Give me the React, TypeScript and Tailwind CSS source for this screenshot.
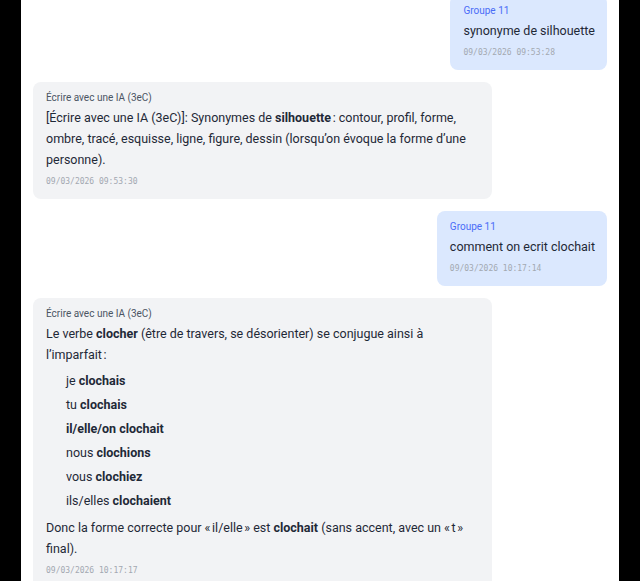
import React from "react";

type Msg =
  | { kind: "user"; author: string; text: string; time: string }
  | { kind: "ai"; author: string; body: React.ReactNode; time: string };

const NB = "\u202F";

const messages: Msg[] = [
  { kind: "user", author: "Groupe 11", text: "synonyme de silhouette", time: "09/03/2026 09:53:28" },
  {
    kind: "ai",
    author: "Écrire avec une IA (3eC)",
    time: "09/03/2026 09:53:30",
    body: (
      <p>
        [Écrire avec une IA (3eC)]: Synonymes de <strong className="font-bold">silhouette</strong>
        {NB}: contour, profil, forme, ombre, tracé, esquisse, ligne, figure, dessin (lorsqu’on évoque la
        forme d’une personne).
      </p>
    ),
  },
  { kind: "user", author: "Groupe 11", text: "comment on ecrit clochait", time: "09/03/2026 10:17:14" },
  {
    kind: "ai",
    author: "Écrire avec une IA (3eC)",
    time: "09/03/2026 10:17:17",
    body: (
      <>
        <p>
          Le verbe <strong className="font-bold">clocher</strong> (être de travers, se désorienter) se
          conjugue ainsi à l’imparfait{NB}:
        </p>
        <ul className="mt-1 mb-1 pl-5 leading-[24px]">
          <li>
            je <strong className="font-bold">clochais</strong>
          </li>
          <li>
            tu <strong className="font-bold">clochais</strong>
          </li>
          <li>
            <strong className="font-bold">il/elle/on clochait</strong>
          </li>
          <li>
            nous <strong className="font-bold">clochions</strong>
          </li>
          <li>
            vous <strong className="font-bold">clochiez</strong>
          </li>
          <li>
            ils/elles <strong className="font-bold">clochaient</strong>
          </li>
        </ul>
        <p>
          Donc la forme correcte pour «{NB}il/elle{NB}» est <strong className="font-bold">clochait</strong>{" "}
          (sans accent, avec un «{NB}t{NB}» final).
        </p>
      </>
    ),
  },
];

function Stamp({ time }: { time: string }) {
  return (
    <div className="mt-1 font-['DejaVu_Sans_Mono',monospace] text-[8px] leading-[16px] text-[#a3a8b1]">
      {time}
    </div>
  );
}

function UserBubble({ author, text, time }: { author: string; text: string; time: string }) {
  return (
    <div className="flex justify-end">
      <div className="rounded-lg bg-[#dbe8fe] pl-[13px] pr-3 pt-2 pb-[9px]">
        <div className="text-[10px] leading-[15px] text-[#4a6cf7]">{author}</div>
        <div className="mt-0.5 text-[12.5px] leading-[21px] text-[#1f2937]">{text}</div>
        <Stamp time={time} />
      </div>
    </div>
  );
}

function AiBubble({ author, body, time }: { author: string; body: React.ReactNode; time: string }) {
  return (
    <div className="flex justify-start">
      <div className="max-w-[80%] rounded-lg bg-[#f2f3f5] pl-[13px] pr-3 pt-2 pb-[9px]">
        <div className="text-[10px] leading-[15px] text-[#4b5563]">{author}</div>
        <div className="mt-0.5 text-[12.5px] leading-[21px] text-[#1f2937]">{body}</div>
        <Stamp time={time} />
      </div>
    </div>
  );
}

export default function App() {
  return (
    <div className="flex h-[581px] w-full justify-center overflow-hidden bg-black">
      <div className="h-full w-[598px] overflow-hidden bg-white px-3 font-['Roboto',sans-serif]">
        <div className="-mt-[5px] flex flex-col gap-3">
          {messages.map((m, i) =>
            m.kind === "user" ? (
              <UserBubble key={i} author={m.author} text={m.text} time={m.time} />
            ) : (
              <AiBubble key={i} author={m.author} body={m.body} time={m.time} />
            )
          )}
        </div>
      </div>
    </div>
  );
}
